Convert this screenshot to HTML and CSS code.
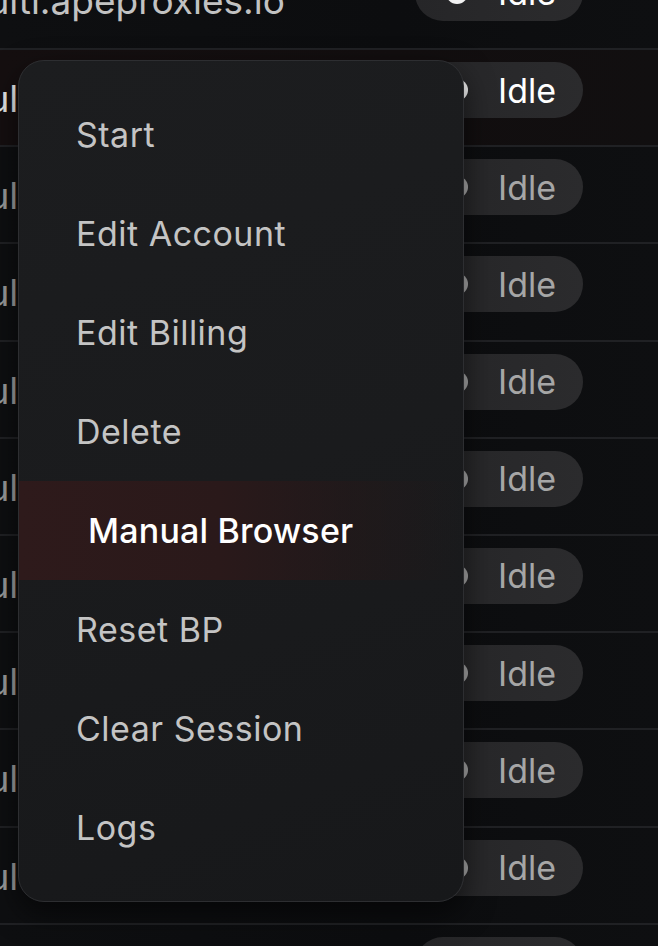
FILE: index.html
```
<!doctype html>
<html lang="en">

<head>
    <meta charset="UTF-8">
    <title>Tasks</title>
    <link rel="stylesheet" href="styles.css">
</head>

<body>
    <div class="task-list">
        <div class="task-row top">
            <span class="task-name">multi.apeproxies.io</span>
            <span class="status-pill"><i class="dot"></i>Idle</span>
        </div>
        <div class="task-row active">
            <span class="task-name">multi.apeproxies.io</span>
            <span class="status-pill"><i class="dot"></i>Idle</span>
        </div>
        <div class="task-row">
            <span class="task-name">multi.apeproxies.io</span>
            <span class="status-pill"><i class="dot"></i>Idle</span>
        </div>
        <div class="task-row">
            <span class="task-name">multi.apeproxies.io</span>
            <span class="status-pill"><i class="dot"></i>Idle</span>
        </div>
        <div class="task-row">
            <span class="task-name">multi.apeproxies.io</span>
            <span class="status-pill"><i class="dot"></i>Idle</span>
        </div>
        <div class="task-row">
            <span class="task-name">multi.apeproxies.io</span>
            <span class="status-pill"><i class="dot"></i>Idle</span>
        </div>
        <div class="task-row">
            <span class="task-name">multi.apeproxies.io</span>
            <span class="status-pill"><i class="dot"></i>Idle</span>
        </div>
        <div class="task-row">
            <span class="task-name">multi.apeproxies.io</span>
            <span class="status-pill"><i class="dot"></i>Idle</span>
        </div>
        <div class="task-row">
            <span class="task-name">multi.apeproxies.io</span>
            <span class="status-pill"><i class="dot"></i>Idle</span>
        </div>
        <div class="task-row">
            <span class="task-name">multi.apeproxies.io</span>
            <span class="status-pill"><i class="dot"></i>Idle</span>
        </div>
        <div class="task-row">
            <span class="task-name">multi.apeproxies.io</span>
            <span class="status-pill"><i class="dot"></i>Idle</span>
        </div>
    </div>

    <!-- context menu for the hovered task -->
    <ul class="context-menu">
        <li class="menu-item">Start</li>
        <li class="menu-item">Edit Account</li>
        <li class="menu-item">Edit Billing</li>
        <li class="menu-item">Delete</li>
        <li class="menu-item hover">Manual Browser</li>
        <li class="menu-item">Reset BP</li>
        <li class="menu-item">Clear Session</li>
        <li class="menu-item">Logs</li>
    </ul>
</body>

</html>
```

FILE: styles.css
```
*,
*:after,
*:before {
    box-sizing: border-box;
    padding: 0;
    margin: 0;
}

html,
body {
    height: 100%;
    overflow: hidden;
}

body {
    position: relative;
    background: #0d0e10;
    font-family: Inter, "Noto Sans", sans-serif;
    color: #9c9c9c;
}

ul {
    list-style: none;
}

.task-list {
    margin-top: -47.2px;
}

.task-row {
    display: flex;
    align-items: flex-start;
    height: 97.2px;
    border-bottom: 2px solid #202124;
    background: linear-gradient(90deg, #0e0f11 0%, #0c0d0f 60%, #0e0f11 100%);
}

.task-row.active {
    background: linear-gradient(90deg, #150f10 0%, #120e0f 60%, #110f10 100%);
}

.task-name {
    flex: 0 0 auto;
    width: 415px;
    margin-left: -45px;
    padding-top: 27px;
    font-size: 37px;
    line-height: 44px;
    white-space: nowrap;
    color: #9a9a9a;
}

.task-row.top .task-name {
    color: #c2c2c2;
    padding-top: 26px;
}

.task-row.active .task-name {
    color: #e6e6e6;
}

.status-pill {
    display: flex;
    align-items: center;
    height: 56px;
    margin-top: 12px;
    margin-left: 45px;
    padding: 0 27px 0 31px;
    border-radius: 28px;
    background: linear-gradient(90deg, #262628, #2b2b2d);
    font-size: 34px;
    color: #a6a6a6;
}

.task-row.top .status-pill,
.task-row.active .status-pill {
    color: #ffffff;
}

.dot {
    display: block;
    width: 22px;
    height: 22px;
    margin-right: 30px;
    border-radius: 50%;
    background: #a8a8a8;
}

.task-row.top .dot,
.task-row.active .dot {
    background: #f2f2f2;
}

.context-menu {
    position: absolute;
    top: 60px;
    left: 18px;
    width: 446px;
    height: 842px;
    padding: 24px 0;
    border: 1.5px solid #2d2e31;
    border-radius: 26px;
    background: linear-gradient(160deg, #1c1d1f 0%, #1a1b1d 50%, #17181a 100%);
    box-shadow: 0 12px 30px rgba(0, 0, 0, 0.55);
    overflow: hidden;
}

.menu-item {
    height: 99px;
    padding-left: 57px;
    font-size: 34px;
    line-height: 99px;
    letter-spacing: 0.5px;
    color: #c4c4c4;
    white-space: nowrap;
}

.menu-item.hover {
    padding-left: 69px;
    color: #ffffff;
    font-weight: 500;
    letter-spacing: 0.2px;
    background: linear-gradient(90deg, #2e1a1b 0%, #2a191a 45%, rgba(36, 24, 25, 0.6) 75%, rgba(27, 28, 30, 0) 100%);
}
```
